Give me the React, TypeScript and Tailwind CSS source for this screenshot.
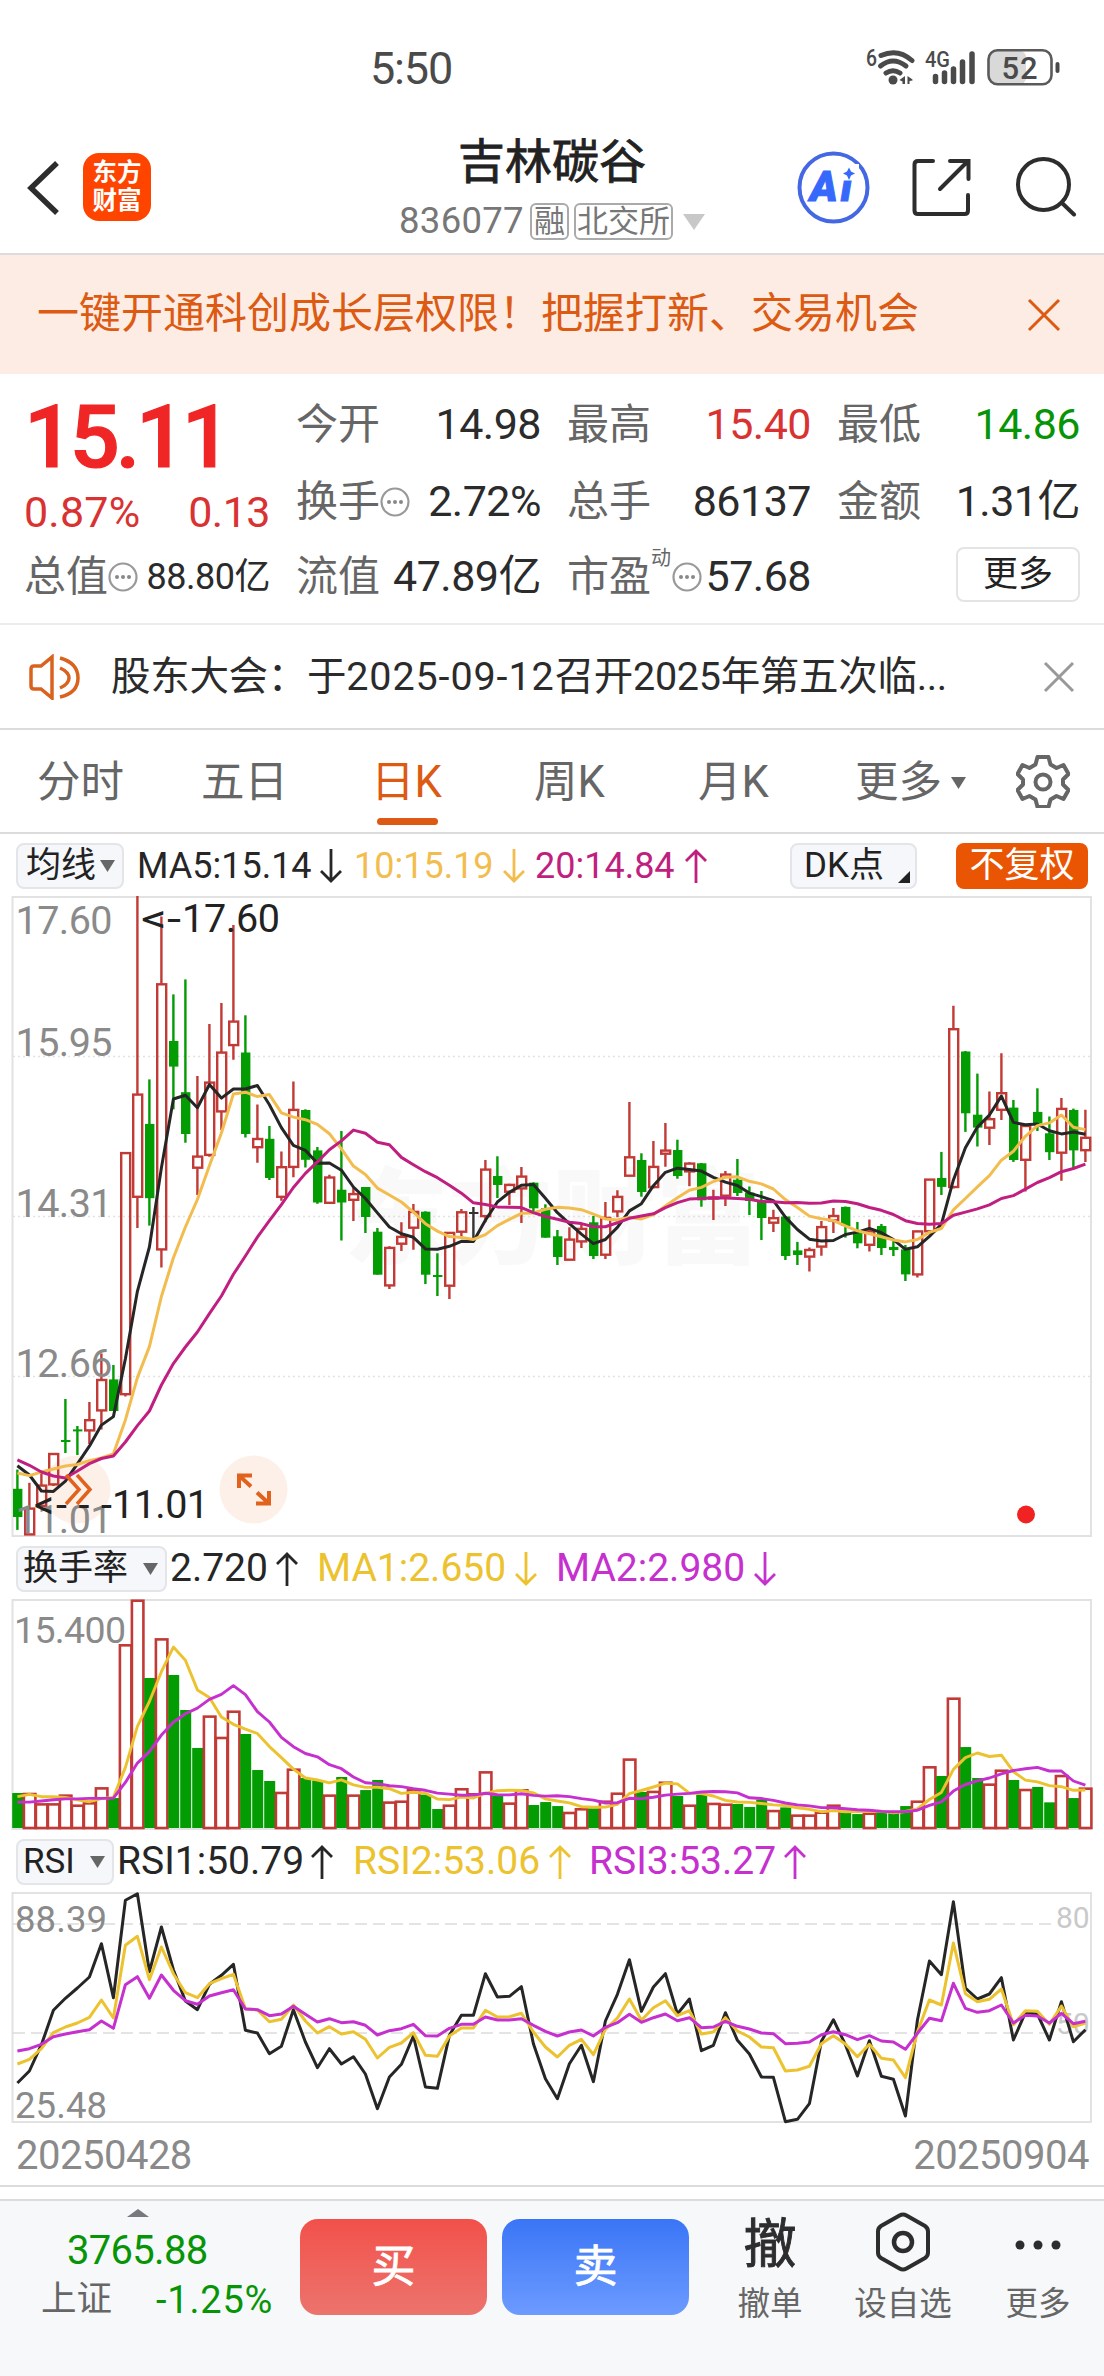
import type { ReactNode } from "react";
import clsx from "clsx";

// [color, high, body top, body bottom, low] in panel pixels
type Candle = [string, number, number, number, number];

const CANDLES: Candle[] = [
  ["G", 573.6, 592.8, 621, 633.9], ["R", 586.8, 612, 639, 639], ["R", 577, 589, 610.4, 611],
  ["R", 557.4, 557.4, 589, 590], ["G", 503, 544, 546, 557], ["G", 530, 533.4, 535, 559],
  ["R", 506, 523.6, 535, 548], ["R", 457.4, 483.4, 515, 533.4], ["G", 469, 483.4, 515, 515],
  ["R", 256.5, 256.5, 498.8, 500.5], ["R", 0, 198, 301.4, 332], ["G", 183.4, 227.9, 302.2, 329.6],
  ["R", 20.6, 87.7, 354, 371.5], ["G", 98.4, 145, 170.6, 213.3], ["G", 83.4, 196.2, 238, 246.7],
  ["R", 180, 260, 272.3, 299], ["R", 128, 186, 259.5, 260.8], ["R", 107, 156, 216, 234],
  ["R", 29, 125, 149.7, 163.8], ["G", 119.3, 156.5, 238, 241.5], ["R", 208.6, 242.4, 251.8, 266.8],
  ["G", 230, 242.8, 282, 284], ["R", 255.6, 270.6, 301.4, 304.8], ["R", 185.6, 213.3, 271.5, 281.3],
  ["G", 213.3, 214, 263.8, 271.5], ["G", 251, 254.4, 306.5, 307.8], ["R", 278.7, 280.9, 307.4, 308],
  ["G", 235, 293.7, 306.5, 344.5], ["R", 291.5, 297.5, 304.4, 324.9], ["G", 291, 291, 321, 337],
  ["G", 332, 335.7, 378.7, 378.7], ["R", 350.3, 351.3, 390, 393], ["R", 326.3, 340.3, 348.3, 355],
  ["R", 308, 315.3, 332.3, 353.7], ["G", 315.3, 315.7, 378.7, 388], ["G", 357.3, 379, 380.7, 400],
  ["R", 336.3, 336.3, 390.3, 403], ["R", 313, 315.7, 336.3, 342.3], ["B", 311, 316, 317, 345.3],
  ["R", 264, 273, 320.7, 326.3], ["G", 260.3, 280, 289, 302], ["R", 287.7, 288.3, 296.3, 309],
  ["R", 271, 280, 293, 327], ["G", 286.3, 286.7, 312.3, 316.3], ["G", 308.3, 312.3, 341.7, 341.7],
  ["G", 334, 340.3, 361, 369], ["R", 331.3, 343, 364.3, 364.3], ["R", 328.3, 332.3, 346, 352],
  ["G", 320, 326.3, 360, 363], ["R", 306, 321.3, 359.3, 363], ["R", 294.3, 300.3, 316, 321.3],
  ["R", 206, 260.7, 280.3, 280.3], ["G", 257.3, 264, 296, 300.7], ["R", 245, 270.3, 291.7, 292.3],
  ["R", 227, 254, 258.3, 270.7], ["G", 243.7, 254, 280, 282.7], ["R", 266.3, 267, 276, 290.3],
  ["G", 267, 267.3, 304.3, 310.7], ["R", 293.7, 301, 303, 324], ["R", 275, 278, 300.3, 310],
  ["G", 263, 283.7, 297, 300], ["G", 290.5, 296.6, 305, 319], ["G", 295, 305, 322, 344],
  ["R", 313.7, 321.6, 327.3, 335.9], ["G", 320.5, 320.5, 360, 364], ["G", 345.9, 354.4, 359, 369],
  ["R", 351.6, 353.4, 361.2, 375.5], ["R", 325, 330.5, 351.2, 359.8], ["R", 312, 319.4, 325, 337],
  ["G", 310.5, 310.9, 330, 341.6], ["G", 326, 335.9, 347.3, 352.3], ["R", 323.4, 334.8, 349.4, 355.5],
  ["G", 328, 330, 352, 359], ["G", 344.8, 350.9, 354, 360], ["G", 349, 353.4, 378.4, 385],
  ["R", 334.4, 334.8, 379, 381.6], ["R", 283, 283, 335.9, 335.9], ["G", 255.9, 282, 290.9, 299],
  ["R", 109.8, 132.6, 291.6, 292.6], ["G", 155, 155.5, 217.3, 235.9], ["G", 177.6, 218.7, 231.6, 250.5],
  ["R", 195.5, 222.6, 232.3, 249], ["R", 157.3, 196.6, 214.4, 224], ["G", 204, 211.6, 264, 265.9],
  ["R", 228.7, 229.4, 264.4, 295.5], ["G", 192.3, 215.9, 227.6, 235], ["G", 220.5, 237.3, 256.2, 264],
  ["R", 202, 212.3, 257.3, 284.8], ["G", 212.6, 214, 254.4, 272.6], ["R", 213.7, 241.2, 254.8, 265.9],
];

const TURNOVER = [
  2.36, 2.36, 1.66, 1.66, 2.25, 1.57, 1.73, 2.74, 2.02, 12.39, 15.4, 10.12, 12.79, 10.32, 7.96, 5.4, 7.58, 6.14,
  7.91, 6.34, 3.91, 3.17, 2.43, 4.0, 3.37, 3.21, 2.25, 3.44, 2.25, 2.56, 3.24, 1.78, 1.84, 2.63, 2.25, 1.28, 1.57,
  2.68, 2.34, 3.82, 2.18, 1.71, 2.61, 1.55, 1.75, 1.48, 1.08, 1.33, 1.33, 1.84, 2.38, 4.68, 2.43, 2.5, 3.12, 2.16,
  1.57, 2.25, 1.69, 1.64, 1.62, 1.42, 1.91, 1.21, 1.39, 0.9, 0.9, 1.1, 1.57, 1.03, 0.94, 1.03, 1.1, 1.03, 1.48,
  1.84, 4.16, 3.51, 8.79, 5.46, 3.37, 2.99, 3.93, 3.24, 2.63, 2.77, 1.73, 3.57, 2.02, 2.72,
];
const TURNOVER_COLORS =
  "GRRRRRRRGR" + "RGRGGGRRRG" + "GGRRGGRGRG" + "GRRRGGRRRR" + "GRRGGGRRGR" +
  "RRGRRGRGRR" + "GGGRGRRRRG" + "GRGGGRRGRG" + "GRRGRGGRGR";

// RSI lines, y in thirds of a pixel
const RSI1 = [
  758, 722, 643, 540, 504, 473, 440, 340, 502, 210, 190, 424, 290, 418, 512, 538, 462, 435, 402, 600, 608, 670, 648,
  538, 635, 712, 655, 701, 679, 731, 835, 740, 702, 617, 770, 774, 615, 555, 555, 430, 500, 498, 469, 640, 745, 805,
  700, 645, 754, 572, 492, 388, 543, 470, 430, 551, 506, 661, 645, 547, 630, 671, 740, 741, 874, 867, 820, 633, 568,
  643, 737, 631, 738, 747, 857, 570, 392, 433, 214, 473, 506, 491, 442, 629, 547, 551, 629, 514, 634, 598,
];
const RSI2 = [
  701, 687, 655, 607, 590, 578, 561, 509, 563, 345, 318, 448, 350, 430, 487, 502, 460, 445, 432, 535, 539, 574, 567,
  524, 572, 608, 589, 611, 604, 627, 683, 651, 638, 607, 675, 678, 617, 593, 593, 540, 560, 559, 549, 605, 650, 680,
  645, 627, 673, 597, 563, 506, 570, 532, 511, 556, 541, 611, 605, 562, 602, 620, 650, 652, 722, 719, 708, 640, 616,
  641, 679, 642, 684, 689, 742, 605, 509, 524, 338, 490, 514, 507, 476, 583, 541, 543, 582, 527, 589, 578,
];
const RSI3 = [
  662, 655, 642, 619, 611, 604, 598, 572, 594, 463, 439, 504, 434, 480, 511, 522, 497, 487, 478, 536, 538, 556, 551,
  528, 552, 575, 565, 577, 574, 585, 614, 601, 595, 582, 616, 617, 594, 582, 582, 560, 569, 569, 565, 585, 603, 617,
  605, 599, 617, 591, 577, 552, 576, 562, 551, 571, 562, 592, 590, 573, 588, 596, 608, 610, 640, 639, 635, 613, 604,
  613, 628, 616, 632, 635, 657, 609, 564, 571, 459, 534, 546, 541, 524, 578, 555, 557, 578, 549, 580, 573,
];

const RED = "#c23a36";
const GREEN = "#039c03";

const px = (i: number) => 17.4 + i * 12;
const line = (ys: number[]) => ys.map((y, i) => `${px(i)},${y.toFixed(1)}`).join(" ");

// moving average; `head` holds the first points, whose window starts before the visible range
function average(values: number[], n: number, head: number[]) {
  return values.map((_, i) =>
    i < head.length ? head[i] : values.slice(i - n + 1, i + 1).reduce((a, b) => a + b, 0) / n,
  );
}

const closes = CANDLES.map(([c, , top, bottom]) => (c === "G" ? bottom : top));
const MA5 = average(closes, 5, [569.8, 579, 595, 595.4]);
const MA10 = average(closes, 10, [577, 579.6, 576, 573, 570, 568.5, 564.6, 562, 557.8]);
const MA20 = average(closes, 20, [
  563.8, 569.3, 576, 580, 582, 575, 567.6, 562.5, 560, 546, 529.6, 515, 489, 467.6, 451, 436, 417.6, 400, 378.3,
]);

const turnoverY = (v: number) => 229 - (v / 15.4) * 228.3;
const TURNOVER_MA1 = average(TURNOVER, 5, [2.11, 2.27, 2.11, 2.11]).map(turnoverY);
const TURNOVER_MA2 = average(TURNOVER, 10, [1.75, 1.75, 1.82, 1.91, 1.96, 1.96, 2.0, 2.0, 2.02]).map(turnoverY);

function Arrow({ up }: { up?: boolean }) {
  return (
    <svg width="22" height="34" viewBox="0 0 22 34" fill="none" stroke="currentColor" strokeWidth="2.8" className="shrink-0">
      {up ? <path d="M11 34V2M1 12L11 2l10 10" /> : <path d="M11 0v32M1 22l10 10 10-10" />}
    </svg>
  );
}

function Triangle({ className }: { className?: string }) {
  return (
    <svg width="15" height="12" viewBox="0 0 15 12" fill="currentColor" className={clsx("shrink-0", className)}>
      <path d="M0 0h15L7.500 12z" />
    </svg>
  );
}

function InfoDots() {
  return (
    <svg width="30" height="30" viewBox="0 0 30 30" className="shrink-0">
      <circle cx="15" cy="15" r="13.500" fill="none" stroke="#999" strokeWidth="2.200" />
      <circle cx="9" cy="15" r="2" fill="#888" />
      <circle cx="15" cy="15" r="2" fill="#888" />
      <circle cx="21" cy="15" r="2" fill="#888" />
    </svg>
  );
}

function Quote({ label, value, className, info }: { label: ReactNode; value: string; className?: string; info?: boolean }) {
  return (
    <div className="flex items-center justify-between whitespace-nowrap">
      <span className="flex items-center text-[42px] text-[#666]">
        {label}
        {info && <InfoDots />}
      </span>
      <span className={clsx("tracking-[-0.5px]", className ?? "text-[43px] text-[#2b2b2b]")}>{value}</span>
    </div>
  );
}

function StatusBar() {
  return (
    <div className="flex h-[136px] items-center pr-[43px] pl-[370px] text-[#4a4a4a]">
      <span className="text-[45px] tracking-[-1.200px]">5:50</span>
      <svg width="196" height="44" viewBox="865 46 196 44" className="ml-auto">
        <text x="866" y="66" fontSize="23" fontWeight="500" fill="#4a4a4a" textLength="11" lengthAdjust="spacingAndGlyphs">6</text>
        <g fill="none" stroke="#4a4a4a" strokeWidth="5" strokeLinecap="round">
          <path d="M881 55.500Q898 48 912 60.500" />
          <path d="M880.500 66Q893 56 906 66" />
          <path d="M886 73Q893 68.500 900 73" />
        </g>
        <circle cx="893" cy="80" r="4.500" fill="#4a4a4a" />
        <path d="M905 76v8h-2.500v-2.500L899.500 80zM907.500 76l5 3.500v1l-3 .5v3h-2z" fill="#4a4a4a" />
        <text x="925" y="66.500" fontSize="22.500" fontWeight="500" fill="#4a4a4a" textLength="25" lengthAdjust="spacingAndGlyphs">4G</text>
        <g stroke="#4a4a4a" strokeWidth="5.500" strokeLinecap="round">
          <path d="M935.500 76.500v5M944.500 73v8.500M953.500 69v12.500M962.500 62v19.500M972 54v27.500" />
        </g>
        <rect x="989" y="51" width="37" height="33" rx="6" fill="#d9d9d9" />
        <rect x="988.500" y="50.200" width="63" height="34" rx="9" fill="none" stroke="#5a5a5a" strokeWidth="2.600" />
        <path d="M1057.500 64v7" stroke="#4a4a4a" strokeWidth="4" strokeLinecap="round" />
        <text x="1001.500" y="78.500" fontSize="31" fontWeight="500" fill="#4a4a4a" textLength="36">52</text>
      </svg>
    </div>
  );
}

function Header() {
  return (
    <header className="flex h-[119px] items-start border-b-2 border-[#dcdcdc] pt-[2px]">
      <svg width="32" height="56" viewBox="0 0 32 56" className="mt-[22px] ml-[27px]" fill="none" stroke="#2d2d2d" strokeWidth="5.500">
        <path d="M30 3L4 28l26 25" />
      </svg>
      <div className="mt-[15px] ml-[24px] flex size-[68px] flex-col items-center justify-center rounded-[16px] bg-[#ff4400] text-[24.500px] leading-[28px] font-bold text-white">
        <span>东方</span>
        <span>财富</span>
      </div>
      <div className="ml-[248px] flex w-[306px] flex-col items-center">
        <h1 className="text-[47px] leading-[47px] text-[#222] [-webkit-text-stroke:0.8px_#222]">吉林碳谷</h1>
        <div className="mt-[18px] flex items-center text-[#777]">
          <span className="text-[36.500px] tracking-[0.300px]">836077</span>
          <span className="ml-[6px] flex h-[37px] items-center rounded-[6px] border-2 border-[#aaa] px-[2px] text-[31px]">融</span>
          <span className="ml-[5px] flex h-[37px] items-center rounded-[6px] border-2 border-[#aaa] px-[1px] text-[31px]">北交所</span>
          <svg width="22" height="16" viewBox="0 0 22 16" className="ml-[10px]">
            <path d="M0 0h22L11 16z" fill="#c8c8c8" />
          </svg>
        </div>
      </div>
      <svg width="74" height="74" viewBox="795 150 74 74" className="mt-[12px] ml-[91px]">
        <circle cx="832.500" cy="187.500" r="34" fill="#fff" stroke="#4468e4" strokeWidth="4" />
        <text x="809" y="200.500" fontSize="42" fontWeight="900" fontStyle="italic" fill="#3568fb" stroke="#3568fb" strokeWidth="1" textLength="42">Ai</text>
        <path d="M840 164h18v16.500h-18z" fill="#fff" />
        <path d="M848 167.500l2 4 4 2-4 2-2 4.500-2-4.500-4-2 4-2z" fill="#3568fb" />
      </svg>
      <svg width="60" height="60" viewBox="910 157 60 60" className="mt-[19px] ml-[41px]" fill="none" stroke="#2d2d2d" strokeWidth="4" strokeLinecap="round">
        <path d="M932 161h-15q-3.500 0-3.500 3.500v46q0 3.500 3.500 3.500h46.500q3.500 0 3.500-3.500V195M949 161h18.500v18M966 162l-27 27" />
      </svg>
      <svg width="62" height="62" viewBox="1014 155 62 62" className="mt-[17px] ml-[44px]" fill="none" stroke="#2d2d2d" strokeWidth="4">
        <circle cx="1042.500" cy="184.500" r="25.500" />
        <path d="M1061 203l12 11.500" strokeLinecap="round" />
      </svg>
    </header>
  );
}

function Banner() {
  return (
    <div className="flex h-[119px] items-center justify-between bg-[#fcece4] pr-[43px] pl-[37px] text-[#dc5a12]">
      <span className="pb-px text-[42px]">一键开通科创成长层权限！把握打新、交易机会</span>
      <svg width="34" height="34" viewBox="0 0 34 34" fill="none" stroke="currentColor" strokeWidth="3">
        <path d="M2 2l30 30M32 2L2 32" />
      </svg>
    </div>
  );
}

function Quotes() {
  return (
    <section className="grid h-[251px] grid-cols-[246px_245px_244px_243px] grid-rows-[77px_77px_73px] gap-x-[26px] border-b-2 border-[#ececec] pt-[12px] pl-[24px]">
      <div className="row-span-2 flex flex-col">
        <span className="mt-[7px] text-[88px] leading-[88px] font-medium tracking-[-4.200px] text-[#f02626] [-webkit-text-stroke:1.200px_#f02626]">
          15.11
        </span>
        <div className="mt-[10px] flex justify-between text-[43px] text-[#d93232]">
          <span className="tracking-[0.200px]">0.87%</span>
          <span className="tracking-[-0.500px]">0.13</span>
        </div>
      </div>
      <Quote label="今开" value="14.98" />
      <Quote label="最高" value="15.40" className="text-[43px] text-[#d93232]" />
      <Quote label="最低" value="14.86" className="text-[43px] text-[#079507]" />
      <Quote label="换手" value="2.72%" info />
      <Quote label="总手" value="86137" />
      <Quote label="金额" value="1.31亿" />
      <Quote label="总值" value="88.80亿" className="text-[36px] text-[#2b2b2b]" info />
      <Quote label="流值" value="47.89亿" />
      <Quote
        label={
          <>
            市盈<sup className="mr-[1px] mb-[18px] text-[20px] leading-[20px]">动</sup>
          </>
        }
        value="57.68"
        info
      />
      <button className="mr-0 mb-[4px] ml-auto flex h-[55px] w-[124px] items-center justify-center self-center rounded-[8px] border-2 border-[#e4e4e4] text-[35px] text-[#222]">
        更多
      </button>
    </section>
  );
}

function News() {
  return (
    <div className="flex h-[105px] items-center border-b-2 border-[#dcdcdc] pr-[29px] pl-[29px] text-[#2b2b2b]">
      <svg width="52" height="46" viewBox="29 653 52 46" fill="none" stroke="#d9631e" strokeWidth="3.500">
        <path d="M52 656v41l-11-9h-7q-3 0-3-3v-17q0-3 3-3h7z" />
        <path d="M60 657q18 5 18 20t-18 19M60 667q9 4 9 10t-9 10" />
      </svg>
      <span className="ml-[30px] text-[39.500px] tracking-[-0.300px] whitespace-nowrap">
        股东大会：于<span className="tracking-[0.900px]">2025-09-12</span>召开2025年第五次临...
      </span>
      <svg width="32" height="32" viewBox="0 0 32 32" className="ml-auto" fill="none" stroke="#999" strokeWidth="3">
        <path d="M2 2l28 28M30 2L2 30" />
      </svg>
    </div>
  );
}

function Tabs() {
  return (
    <nav className="flex h-[104px] items-center border-b-2 border-[#dcdcdc] pt-[3px] pl-[37px] text-[43.500px] text-[#666]">
      <span className="w-[164px]">分时</span>
      <span className="w-[170px]">五日</span>
      <span className="relative w-[163px] text-[#dc5a12]">
        日K
        <i className="absolute top-[57px] left-[6px] h-[7px] w-[61px] rounded-full bg-[#dc5a12]" />
      </span>
      <span className="w-[164px]">周K</span>
      <span className="w-[157px]">月K</span>
      <span>更多</span>
      <Triangle className="ml-[9px]" />
      <svg width="54" height="54" viewBox="0 0 54 54" className="mb-[3px] ml-[50px]" fill="none" stroke="#666" strokeWidth="4" strokeLinejoin="round">
        <path d="M21.500 3h11l2 7.500 6 3.500 7-3 5 9-5.500 5.500v5l5.500 5.500-5 9-7-3-6 3.500-2 7.500h-11l-2-7.500-6-3.500-7 3-5-9L7 30.500v-5L1.500 20l5-9 7 3 6-3.500z" />
        <circle cx="27" cy="28" r="7.500" />
      </svg>
    </nav>
  );
}

function Picker({ children, className }: { children: ReactNode; className?: string }) {
  return (
    <span
      className={clsx(
        "flex h-[46px] shrink-0 items-center justify-between rounded-[8px] border-2 border-[#e3e5e8] bg-[#f5f7fa] text-[35px] text-[#222]",
        className,
      )}
    >
      {children}
    </span>
  );
}

function Indicator({ text, up, className }: { text: string; up?: boolean; className?: string }) {
  return (
    <span className={clsx("flex items-center justify-between whitespace-nowrap", className)}>
      {text}
      <Arrow up={up} />
    </span>
  );
}

function KLine() {
  return (
    <svg width="1104" height="642" viewBox="0 0 1104 642" className="block">
      <text x="344" y="360" fontSize="104" fontWeight="900" fill="#f9f9f9">东方财富</text>
      <g stroke="#e2e2e2" strokeWidth="1.500" strokeDasharray="2 3">
        <path d="M13 160.500H1091M13 320.500H1091M13 480.500H1091" />
      </g>
      <rect x="12.500" y="1" width="1078.500" height="639" fill="none" stroke="#e2e2e2" strokeWidth="2" />
      <g fill="#fdeee6" fillOpacity="0.900">
        <circle cx="76.500" cy="593.500" r="34" />
        <circle cx="253.500" cy="593.500" r="34" />
      </g>
      {CANDLES.map(([c, high, top, bottom, low], i) => {
        const x = px(i);
        if (c === "R") {
          return (
            <g key={i} fill="none" stroke={RED} strokeWidth="2.400">
              <path d={`M${x} ${high}V${top}M${x} ${bottom}V${low}`} />
              <rect x={x - 4.200} y={top + 0.6} width="9" height={Math.max(bottom - top - 1.2, 1)} />
            </g>
          );
        }
        const color = c === "G" ? GREEN : "#333";
        return (
          <g key={i} fill={color}>
            <rect x={x - 1.200} y={high} width="2.400" height={low - high} />
            <rect x={x - 4.400} y={top} width="9.400" height={Math.max(bottom - top, 2)} />
          </g>
        );
      })}
      <g fill="none" strokeWidth="3" strokeLinejoin="round">
        <polyline points={line(MA5)} stroke="#262626" />
        <polyline points={line(MA10)} stroke="#f2bd4e" />
        <polyline points={line(MA20)} stroke="#c01f80" />
      </g>
      <g fill="none" stroke="#e0621c" strokeWidth="3.500">
        <path d="M66 579l13 14.500-13 14.500M77 579l13 14.500-13 14.500" />
        <path d="M239 592v-12.500h13M239 579.500l12 11M269 595v12.500h-13M269 607.500l-12-11" strokeWidth="4" />
      </g>
      <g fontSize="39.500" fill="#8a8a8a">
        <text x="15.500" y="38" textLength="97">17.60</text>
        <text x="15.500" y="160" textLength="97">15.95</text>
        <text x="15.500" y="320.500" textLength="97">14.31</text>
        <text x="15.500" y="480.500" textLength="97">12.66</text>
        <text x="15.500" y="637" textLength="97">11.01</text>
      </g>
      <g fontSize="39.500" fill="#222">
        <text x="141" y="35.500" textLength="40" lengthAdjust="spacingAndGlyphs">&lt;-</text>
        <text x="182" y="35.500" textLength="98">17.60</text>
        <text x="34" y="622">&lt;</text>
        <text x="56" y="622" textLength="56">---</text>
        <text x="112" y="622" textLength="97">11.01</text>
      </g>
      <circle cx="1026" cy="618.500" r="9" fill="#f02222" />
    </svg>
  );
}

function TurnoverChart() {
  return (
    <svg width="1104" height="232" viewBox="0 0 1104 232" className="block">
      <rect x="12.500" y="1" width="1078.500" height="229" fill="none" stroke="#e2e2e2" strokeWidth="2" />
      {TURNOVER.map((v, i) => {
        const y = turnoverY(v);
        return TURNOVER_COLORS[i] === "R" ? (
          <rect key={i} x={px(i) - 5.500} y={y + 1} width="11.500" height={228 - y} fill="#fff" stroke={RED} strokeWidth="2.600" />
        ) : (
          <rect key={i} x={px(i) - 5.200} y={y} width="11" height={229 - y} fill={GREEN} />
        );
      })}
      <g fill="none" strokeWidth="2.900" strokeLinejoin="round">
        <polyline points={line(TURNOVER_MA1)} stroke="#ecc22e" />
        <polyline points={line(TURNOVER_MA2)} stroke="#c530cf" />
      </g>
      <text x="14" y="44" fontSize="37.500" fill="#8a8a8a" textLength="112">15.400</text>
    </svg>
  );
}

function RsiChart() {
  const rsi = (values: number[]) => line(values.map((v) => (v - 188) / 3 + 1));
  return (
    <svg width="1104" height="232" viewBox="0 0 1104 232" className="block">
      <rect x="12.500" y="1" width="1078.500" height="229" fill="none" stroke="#e2e2e2" strokeWidth="2" />
      <g stroke="#c9c9c9" strokeWidth="1.200" strokeDasharray="12 6">
        <path d="M13 32H1052M13 141H1052" />
      </g>
      <g fontSize="36.500" fill="#8a8a8a">
        <text x="15" y="39.500" textLength="92">88.39</text>
        <text x="15" y="225.500" textLength="92">25.48</text>
      </g>
      <g fontSize="30" fill="#c9c9c9">
        <text x="1056" y="36">80</text>
        <text x="1056" y="141.500">50</text>
      </g>
      <g fill="none" strokeWidth="3" strokeLinejoin="round">
        <polyline points={rsi(RSI1)} stroke="#262626" />
        <polyline points={rsi(RSI2)} stroke="#ecc22e" />
        <polyline points={rsi(RSI3)} stroke="#c530cf" />
      </g>
    </svg>
  );
}

function BottomBar() {
  return (
    <footer className="flex h-[177px] items-start border-t-2 border-[#dcdcdc] bg-[#f6f8fa]">
      <div className="flex w-[300px] flex-col text-[#079507]">
        <svg width="22" height="8" viewBox="0 0 22 8" className="mt-[8px] ml-[127px]">
          <path d="M11 0l11 8H0z" fill="#77797c" />
        </svg>
        <span className="mt-[14px] ml-[67px] text-[40px] leading-[40px] tracking-[-0.700px]">3765.88</span>
        <div className="mt-[10px] flex items-center pl-[41px]">
          <span className="text-[35.500px] text-[#666]">上证</span>
          <span className="ml-[44px] text-[38px] tracking-[0.800px]">-1.25%</span>
        </div>
      </div>
      <button className="mt-[18px] h-[96px] w-[187px] rounded-[18px] bg-linear-to-b from-[#f2504a] to-[#ec736d] text-[44px] text-white [-webkit-text-stroke:0.800px_#fff]">
        买
      </button>
      <button className="mt-[18px] ml-[15px] h-[96px] w-[187px] rounded-[18px] bg-linear-to-b from-[#3a75f6] to-[#6c9aff] text-[44px] text-white [-webkit-text-stroke:0.800px_#fff]">
        卖
      </button>
      <div className="flex w-[162px] flex-col items-center text-[#666]">
        <span className="mt-[18px] text-[53px] leading-[53px] text-[#2d2d2d] [-webkit-text-stroke:0.900px_#2d2d2d]">撤</span>
        <span className="mt-[16px] text-[32.500px]">撤单</span>
      </div>
      <div className="flex w-[104px] flex-col items-center text-[#666]">
        <svg width="56" height="60" viewBox="0 0 56 60" className="mt-[11px]" fill="none" stroke="#2d2d2d" strokeWidth="4">
          <path d="M24.500 3.500q3.500-2 7 0L50 14q3 2 3 5.500v21q0 3.500-3 5.500L31.500 56.500q-3.500 2-7 0L6 46q-3-2-3-5.500v-21Q3 16 6 14z" />
          <circle cx="28" cy="30" r="9" strokeWidth="4.500" />
        </svg>
        <span className="mt-[16px] text-[32.500px]">设自选</span>
      </div>
      <div className="ml-[50px] flex w-[66px] flex-col items-center text-[#666]">
        <svg width="48" height="10" viewBox="0 0 48 10" className="mt-[39px]" fill="#2d2d2d">
          <circle cx="6" cy="5" r="4.500" />
          <circle cx="24" cy="5" r="4.500" />
          <circle cx="42" cy="5" r="4.500" />
        </svg>
        <span className="mt-[38px] text-[32.500px]">更多</span>
      </div>
    </footer>
  );
}

export default function App() {
  return (
    <div className="flex h-[2376px] w-[1104px] flex-col overflow-hidden bg-white font-['Roboto','Noto_Sans_CJK_SC',sans-serif] leading-none">
      <StatusBar />
      <Header />
      <Banner />
      <Quotes />
      <News />
      <Tabs />

      {/* K line */}
      <div className="flex h-[62px] items-center pt-[1px] pl-[16px] text-[36px]">
        <Picker className="w-[108px] pr-[7px] pl-[8px]">
          均线
          <Triangle className="text-[#666]" />
        </Picker>
        <Indicator text="MA5:15.14" className="ml-[13px] w-[205px] text-[#262626]" />
        <Indicator text="10:15.19" className="ml-[12px] w-[171px] text-[#f2bd4e]" />
        <Indicator text="20:14.84" up className="ml-[10px] w-[172px] text-[#c01f80]" />
        <Picker className="relative ml-[83px] w-[127px] pl-[12px]">
          DK点
          <svg width="12" height="12" viewBox="0 0 12 12" className="absolute right-[5px] bottom-[4px]">
            <path d="M12 0v12H0z" fill="#222" />
          </svg>
        </Picker>
        <span className="ml-[39px] flex h-[46px] w-[132px] items-center justify-center rounded-[8px] bg-[#ea5504] text-[35px] text-white">
          不复权
        </span>
      </div>
      <KLine />

      {/* Turnover */}
      <div className="flex h-[61px] items-center pl-[16px] text-[39px]">
        <Picker className="w-[151px] pr-[7px] pl-[5px]">
          换手率
          <Triangle className="text-[#666]" />
        </Picker>
        <Indicator text="2.720" up className="ml-[3px] w-[128px] text-[#262626]" />
        <Indicator text="MA1:2.650" className="ml-[19px] w-[220px] text-[#ecc22e]" />
        <Indicator text="MA2:2.980" className="ml-[19px] w-[220px] text-[#c530cf]" />
      </div>
      <TurnoverChart />

      {/* RSI */}
      <div className="flex h-[61px] items-center pl-[16px] text-[39px]">
        <Picker className="w-[98px] pr-[7px] pl-[5px]">
          RSI
          <Triangle className="text-[#666]" />
        </Picker>
        <Indicator text="RSI1:50.79" up className="ml-[3px] w-[216px] text-[#262626]" />
        <Indicator text="RSI2:53.06" up className="ml-[20px] w-[218px] text-[#ecc22e]" />
        <Indicator text="RSI3:53.27" up className="ml-[18px] w-[217px] text-[#c530cf]" />
      </div>
      <RsiChart />

      <div className="flex h-[63px] items-center justify-between border-b-2 border-[#dcdcdc] pt-[2px] pr-[15px] pl-[16px] text-[40px] tracking-[-0.500px] text-[#8a8a8a]">
        <span>20250428</span>
        <span>20250904</span>
      </div>
      <div className="h-[12px] shrink-0" />
      <BottomBar />
    </div>
  );
}
